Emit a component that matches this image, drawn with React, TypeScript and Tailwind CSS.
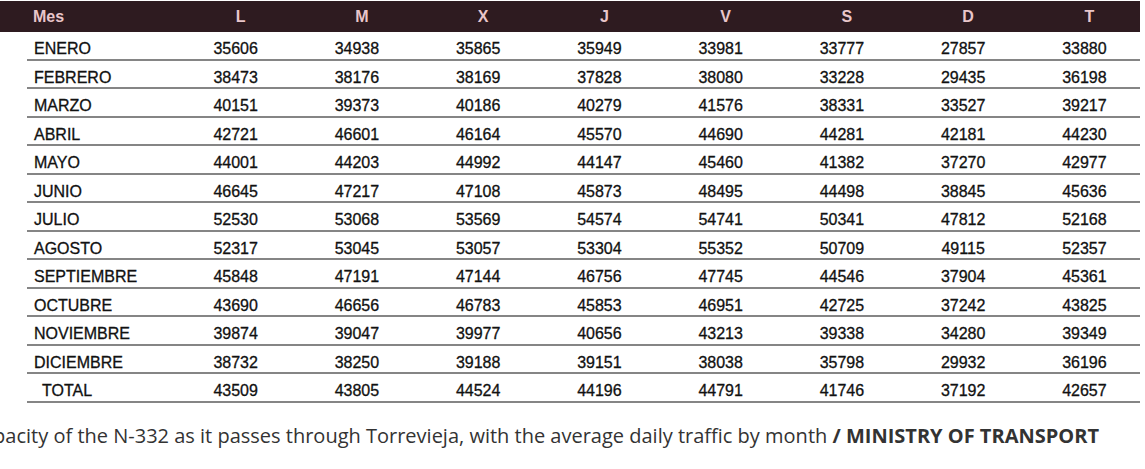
const head = ['L', 'M', 'X', 'J', 'V', 'S', 'D', 'T']

const rows: [string, number[]][] = [
  ['ENERO', [35606, 34938, 35865, 35949, 33981, 33777, 27857, 33880]],
  ['FEBRERO', [38473, 38176, 38169, 37828, 38080, 33228, 29435, 36198]],
  ['MARZO', [40151, 39373, 40186, 40279, 41576, 38331, 33527, 39217]],
  ['ABRIL', [42721, 46601, 46164, 45570, 44690, 44281, 42181, 44230]],
  ['MAYO', [44001, 44203, 44992, 44147, 45460, 41382, 37270, 42977]],
  ['JUNIO', [46645, 47217, 47108, 45873, 48495, 44498, 38845, 45636]],
  ['JULIO', [52530, 53068, 53569, 54574, 54741, 50341, 47812, 52168]],
  ['AGOSTO', [52317, 53045, 53057, 53304, 55352, 50709, 49115, 52357]],
  ['SEPTIEMBRE', [45848, 47191, 47144, 46756, 47745, 44546, 37904, 45361]],
  ['OCTUBRE', [43690, 46656, 46783, 45853, 46951, 42725, 37242, 43825]],
  ['NOVIEMBRE', [39874, 39047, 39977, 40656, 43213, 39338, 34280, 39349]],
  ['DICIEMBRE', [38732, 38250, 39188, 39151, 38038, 35798, 29932, 36196]],
  ['TOTAL', [43509, 43805, 44524, 44196, 44791, 41746, 37192, 42657]],
]

export default function App() {
  return (
    <div className="w-[1145px] h-[469px] bg-white overflow-hidden font-['Liberation_Sans',Arial,sans-serif]">
      {/* Header */}
      <div className="mt-px w-[1140px] h-[31px] bg-[#2e1b20] grid grid-cols-[175px_repeat(8,121.25px)] items-center text-[16px] font-bold text-[#e9c6ca]">
        <div className="pl-[33px]">Mes</div>
        {head.map((h) => (
          <div key={h} className="pl-[10px] text-center">{h}</div>
        ))}
      </div>

      {/* Body */}
      <div>
        {rows.map(([month, vals]) => (
          <div
            key={month}
            className="ml-[27px] w-[1113px] h-[28.5px] border-b-[2.5px] border-[#858585] grid grid-cols-[148px_repeat(8,121.25px)] items-end pb-[1.5px] text-[16px] leading-none text-[#111] [-webkit-text-stroke:0.3px_#111]"
          >
            <div className={month === 'TOTAL' ? 'pl-[15px]' : 'pl-[7px]'}>{month}</div>
            {vals.map((v, i) => (
              <div key={i} className="text-center">{v}</div>
            ))}
          </div>
        ))}
      </div>

      {/* Caption, cut at the left edge as in the source */}
      <div className="mt-[18px] flex justify-end overflow-hidden whitespace-nowrap pr-[46px] font-['Open_Sans',sans-serif] text-[20px] text-[#333]">
        <span>
          Capacity of the N-332 as it passes through Torrevieja, with the average daily traffic by month{' '}
          <b className="font-bold">/ MINISTRY OF TRANSPORT</b>
        </span>
      </div>
    </div>
  )
}
